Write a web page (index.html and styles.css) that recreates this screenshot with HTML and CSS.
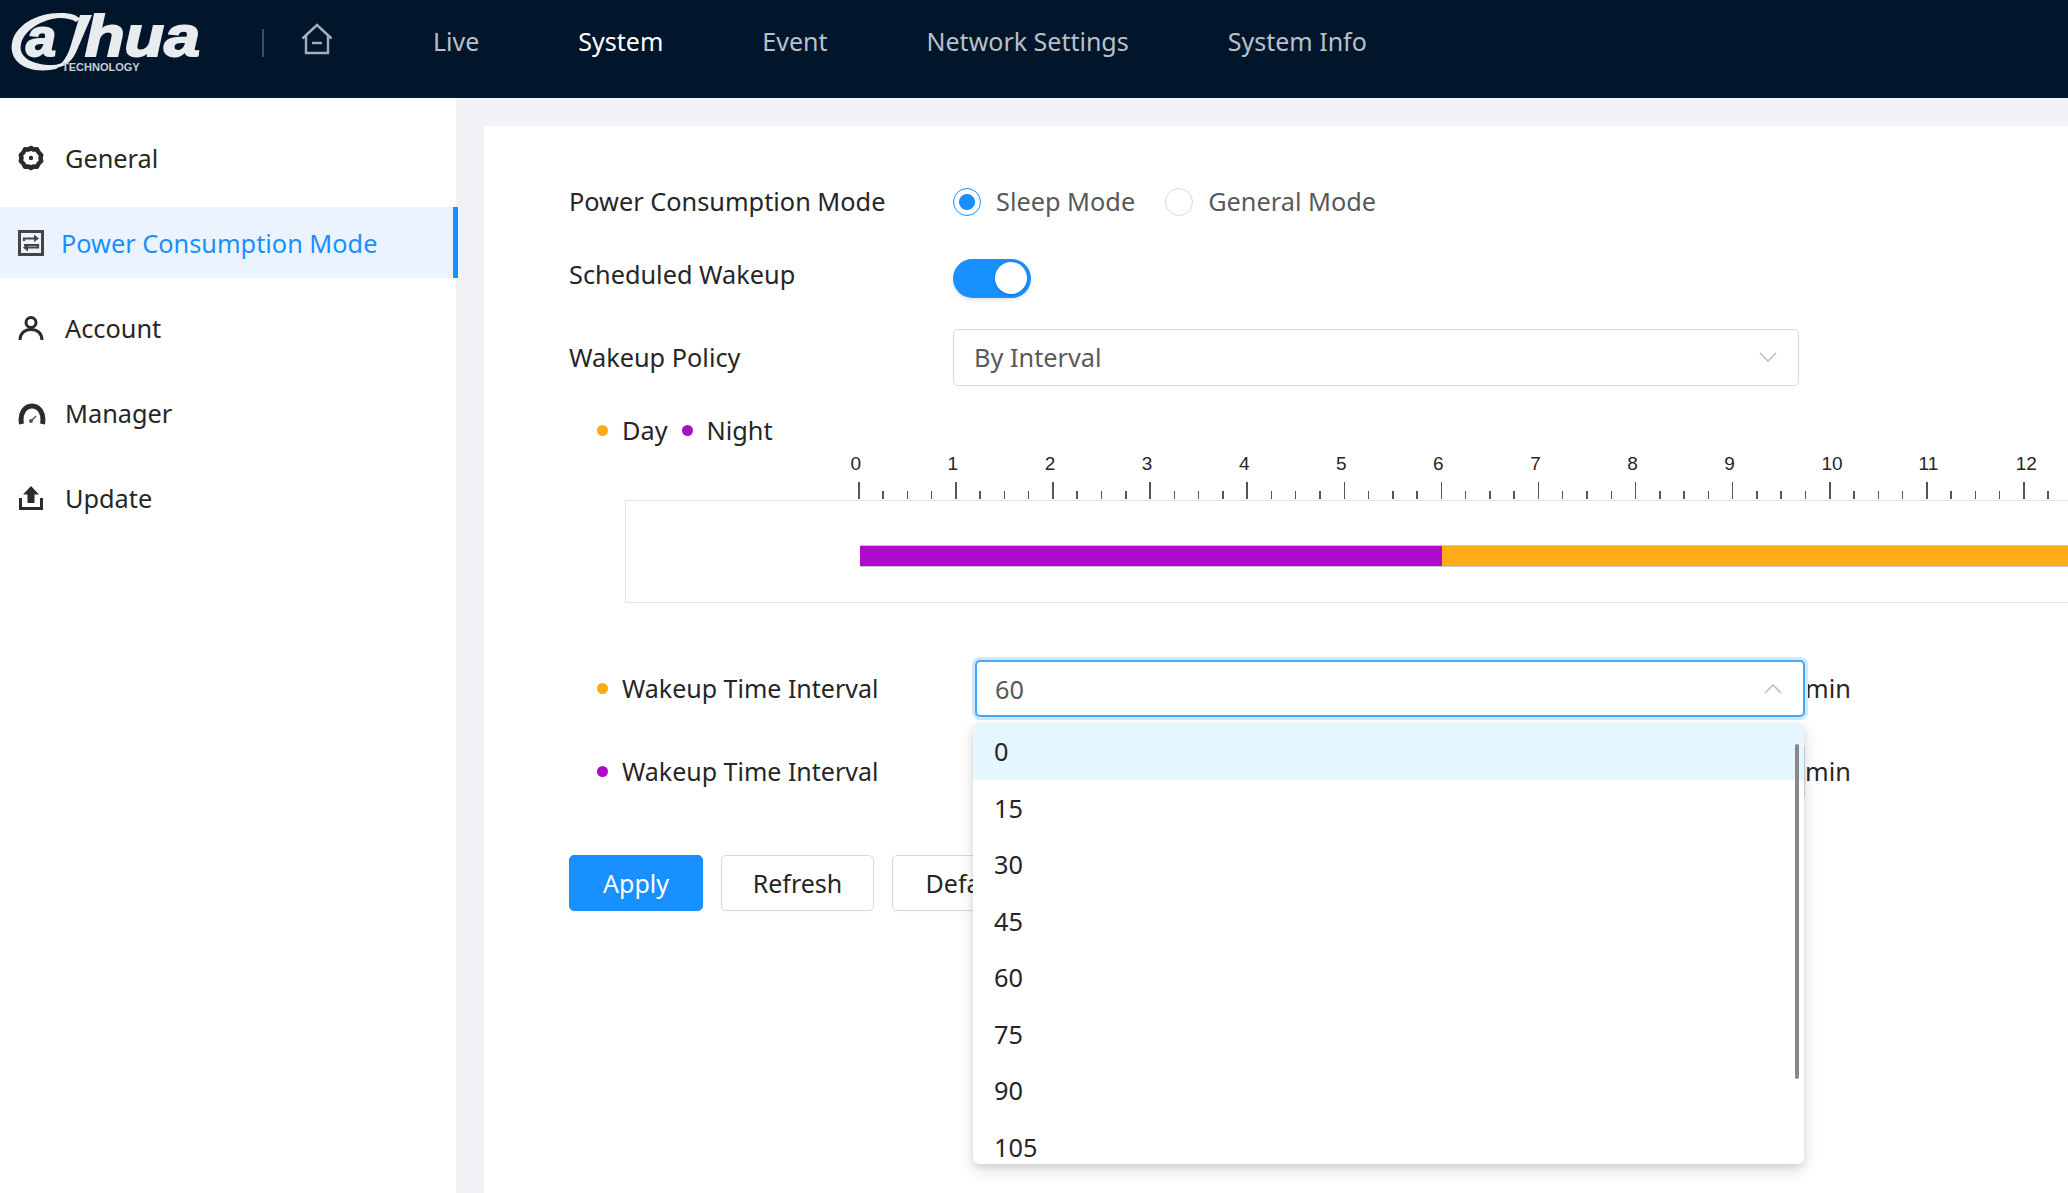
FILE: index.html
```html
<!DOCTYPE html>
<html lang="en">
<head>
  <meta charset="UTF-8">
  <title>Power Consumption Mode</title>
  <link rel="stylesheet" href="styles.css">
</head>
<body>
  <header class="topbar">
    <svg class="logo" viewBox="0 0 210 80" width="210" height="80">
      <path fill="#e9ecef" d="M50 70C24 73 9 60 12 43C15 25 38 12 62 13C70 13 77 15 80 19L76 22C72 19 66 18 60 18C42 19 24 30 21 44C18 57 32 65 52 65C58 65 62 63 66 61L56 69Z"/>
      <path fill="#e9ecef" d="M80 15L92 15L77 50C73 60 67 66 56 68C64 62 67 56 70 48Z"/>
      <text class="logo-a" x="26" y="56">a</text>
      <text class="logo-word" x="85" y="56" textLength="115" lengthAdjust="spacingAndGlyphs">hua</text>
      <text class="logo-sub" x="62" y="71">TECHNOLOGY</text>
    </svg>
    <span class="topbar-divider"></span>
    <svg class="home-icon" viewBox="0 0 32 32" width="32" height="32">
      <path fill="none" stroke="#a6aeb8" stroke-width="2.4" d="M1.5 15.5L16 2L30.500 15.500"/>
      <path fill="none" stroke="#a6aeb8" stroke-width="2.4" d="M5 13V30H27V13"/>
      <path fill="none" stroke="#a6aeb8" stroke-width="2.4" d="M11 20H21"/>
    </svg>
    <nav class="topnav">
      <a>Live</a>
      <a class="active">System</a>
      <a>Event</a>
      <a>Network Settings</a>
      <a>System Info</a>
    </nav>
  </header>

  <div class="main">
    <aside class="sidebar">
      <div class="side-item">
        <svg class="side-icon" viewBox="0 0 26 26" width="26" height="26">
          <path fill="none" stroke="#2b2b2b" stroke-width="4.500" stroke-linejoin="round" d="M13 3L15.500 4.500L19 4.300L20.700 7.500L23.200 10L22.500 13L23.200 16L20.700 18.500L19 21.700L15.500 21.500L13 23L10.500 21.500L7 21.700L5.300 18.500L2.800 16L3.500 13L2.800 10L5.300 7.500L7 4.300L10.500 4.500Z"/>
          <circle cx="13" cy="13" r="2.200" fill="#2b2b2b"/>
        </svg>
        <span>General</span>
      </div>
      <div class="side-item selected">
        <svg class="side-icon" viewBox="0 0 26 26" width="26" height="26">
          <rect x="1.500" y="1.500" width="23" height="23" fill="none" stroke="#444" stroke-width="3"/>
          <path fill="none" stroke="#444" stroke-width="2.200" d="M6 11V8.500H19M6 15H20V17.500H7"/>
          <path fill="#444" d="M16 4.500L21 8.500L16 12ZM10 14L5 17.500L10 21.500Z"/>
        </svg>
        <span>Power Consumption Mode</span>
      </div>
      <div class="side-item">
        <svg class="side-icon" viewBox="0 0 26 26" width="26" height="26">
          <circle cx="13" cy="7.500" r="5" fill="none" stroke="#2b2b2b" stroke-width="3"/>
          <path fill="none" stroke="#2b2b2b" stroke-width="3" d="M2 25C2 18 7 14.500 13 14.500C19 14.500 24 18 24 25"/>
        </svg>
        <span>Account</span>
      </div>
      <div class="side-item item-manager">
        <svg class="side-icon" viewBox="0 0 28 26" width="28" height="26">
          <path fill="none" stroke="#2b2b2b" stroke-width="5" d="M3.500 24C1.500 13 7 6 14 6C21 6 26.500 13 24.500 24"/>
          <path fill="none" stroke="#555" stroke-width="1.500" d="M13 21L18 16"/>
          <circle cx="13" cy="21" r="2" fill="#555"/>
        </svg>
        <span>Manager</span>
      </div>
      <div class="side-item">
        <svg class="side-icon" viewBox="0 0 26 26" width="26" height="26">
          <path fill="#2b2b2b" d="M13 1L21 9.500H16.500V18H9.500V9.500H5Z"/>
          <path fill="none" stroke="#2b2b2b" stroke-width="3" d="M2.500 13V23.500H23.500V13"/>
        </svg>
        <span>Update</span>
      </div>
    </aside>

    <section class="content">
      <div class="card">
        <div class="form-row row-mode">
          <label class="form-label">Power Consumption Mode</label>
          <span class="radio checked"></span>
          <span class="radio-text">Sleep Mode</span>
          <span class="radio"></span>
          <span class="radio-text">General Mode</span>
        </div>
        <div class="form-row row-switch">
          <label class="form-label">Scheduled Wakeup</label>
          <span class="switch"><span class="switch-knob"></span></span>
        </div>
        <div class="form-row row-policy">
          <label class="form-label">Wakeup Policy</label>
          <div class="select select-policy">
            <span>By Interval</span>
            <svg class="chevron" viewBox="0 0 18 10" width="18" height="10"><path fill="none" stroke="#bfbfbf" stroke-width="1.600" d="M1 1L9 9L17 1"/></svg>
          </div>
        </div>

        <div class="legend">
          <span class="dot dot-day"></span><span>Day</span>
          <span class="dot dot-night"></span><span>Night</span>
        </div>

        <div class="ruler">
          <div class="ruler-labels">
            <span>0</span><span>1</span><span>2</span><span>3</span><span>4</span><span>5</span><span>6</span>
            <span>7</span><span>8</span><span>9</span><span>10</span><span>11</span><span>12</span>
          </div>
          <div class="ruler-ticks"></div>
        </div>
        <div class="chart">
          <div class="bar">
            <div class="bar-night"></div>
            <div class="bar-day"></div>
          </div>
        </div>

        <div class="form-row row-interval">
          <span class="dot dot-day"></span>
          <label class="interval-label">Wakeup Time Interval</label>
          <div class="select-wrap">
            <div class="select select-interval focused">
              <span>60</span>
              <svg class="chevron" viewBox="0 0 18 10" width="18" height="10"><path fill="none" stroke="#bfbfbf" stroke-width="1.600" d="M1 9L9 1L17 9"/></svg>
            </div>
            <div class="dropdown">
              <div class="option current">0</div>
              <div class="option">15</div>
              <div class="option">30</div>
              <div class="option">45</div>
              <div class="option">60</div>
              <div class="option">75</div>
              <div class="option">90</div>
              <div class="option">105</div>
              <div class="scroll-thumb"></div>
            </div>
          </div>
          <span class="unit">min</span>
        </div>
        <div class="form-row row-interval second">
          <span class="dot dot-night"></span>
          <label class="interval-label">Wakeup Time Interval</label>
          <div class="select select-interval"></div>
          <span class="unit">min</span>
        </div>

        <div class="actions">
          <button class="btn btn-primary">Apply</button>
          <button class="btn">Refresh</button>
          <button class="btn">Default</button>
        </div>
      </div>
    </section>
  </div>
</body>
</html>
```

FILE: styles.css
```css
* {
  box-sizing: border-box;
}
html, body {
  height: 100%;
}
body {
  margin: 0;
  overflow: hidden;
  display: flex;
  flex-direction: column;
  background-color: #fff;
  color: #262626;
  font-family: "Noto Sans", "Open Sans", sans-serif;
  font-size: 25.3px;
}

/* top bar */
.topbar {
  height: 98px;
  flex-shrink: 0;
  display: flex;
  align-items: flex-start;
  background-color: #01152b;
}
.logo {
  display: block;
  flex-shrink: 0;
}
.logo-a, .logo-word {
  font-family: "Liberation Sans", sans-serif;
  font-weight: bold;
  font-style: italic;
  fill: #e9ecef;
  stroke: #e9ecef;
  stroke-width: 2px;
}
.logo-a {
  font-size: 54px;
}
.logo-word {
  font-size: 58px;
}
.logo-sub {
  font-family: "Liberation Sans", sans-serif;
  font-weight: bold;
  font-size: 11px;
  fill: #c9ced4;
}
.topbar-divider {
  width: 2px;
  height: 28px;
  margin: 29px 0 0 52px;
  background-color: #3d4c5e;
}
.home-icon {
  margin: 23px 0 0 37px;
}
.topnav {
  display: flex;
  margin-left: 100px;
  font-size: 25px;
}
.topnav a {
  margin-right: 99px;
  line-height: 82px;
  color: #b9c0c8;
}
.topnav a.active {
  color: #fff;
}

.main {
  flex: 1;
  display: flex;
  min-height: 0;
}

/* left menu */
.sidebar {
  width: 456px;
  flex-shrink: 0;
  padding-top: 24px;
  background-color: #fff;
}
.side-item {
  position: relative;
  height: 71px;
  margin-bottom: 14px;
  padding-left: 18px;
  display: flex;
  align-items: center;
  gap: 21px;
}
.side-item.selected {
  gap: 17px;
  background-color: #ebf3fe;
  color: #1890ff;
}
.side-item.item-manager {
  gap: 19px;
}
.side-item.selected::after {
  content: "";
  position: absolute;
  top: 0;
  right: -2px;
  width: 5px;
  height: 100%;
  background-color: #1890ff;
}

/* page content */
.content {
  flex: 1;
  min-width: 0;
  padding: 28px 0 0 28px;
  background-color: #f0f2f5;
}
.card {
  height: 100%;
  padding: 48px 0 0 85px;
  background-color: #fff;
}
.form-row {
  display: flex;
  align-items: center;
}
.form-label {
  width: 384px;
  flex-shrink: 0;
}
.row-mode {
  height: 56px;
}
.row-mode .form-label, .row-mode .radio-text {
  margin-top: -2px;
}
.row-switch {
  height: 56px;
  margin-top: 20px;
}
.row-switch .form-label {
  margin-top: -8px;
}
.row-policy {
  height: 56px;
  margin-top: 23px;
}
.radio {
  width: 28px;
  height: 28px;
  flex-shrink: 0;
  border: 1px solid #d9d9d9;
  border-radius: 50%;
  background-color: #fff;
}
.radio.checked {
  border: 1.500px solid #1890ff;
  background: radial-gradient(circle, #1890ff 0 7.500px, transparent 8.500px);
}
.radio-text {
  margin-left: 15px;
  margin-right: 30px;
  color: #595959;
}
.switch {
  width: 78px;
  height: 39px;
  padding: 3px 4px 0 0;
  display: flex;
  justify-content: flex-end;
  border-radius: 20px;
  background-color: #1890ff;
  box-shadow: 0 2px 4px rgba(0, 0, 0, 0.12);
}
.switch-knob {
  width: 32px;
  height: 32px;
  border-radius: 50%;
  background-color: #fff;
  box-shadow: 0 1px 3px rgba(0, 40, 80, 0.3);
}
.select {
  display: flex;
  align-items: center;
  justify-content: space-between;
  border: 1px solid #d9d9d9;
  border-radius: 5px;
  background-color: #fff;
  color: #595959;
}
.select-policy {
  width: 846px;
  height: 57px;
  padding: 0 21px 0 20px;
}
.select-wrap {
  position: relative;
  flex-shrink: 0;
}
.select-interval {
  width: 830px;
  height: 57px;
  padding: 0 21px 0 18px;
}
.select-interval.focused {
  border: 2px solid #40a9ff;
  box-shadow: 0 0 0 3px #cfe7ff;
}

.legend {
  height: 40px;
  margin-top: 25px;
  padding-left: 28px;
  display: flex;
  align-items: center;
}
.dot {
  width: 11px;
  height: 11px;
  flex-shrink: 0;
  border-radius: 50%;
}
.dot-day {
  background-color: #fdab17;
}
.dot-night {
  background-color: #ad0bcc;
}
.legend .dot {
  margin-right: 14px;
}
.legend .dot-night {
  margin-left: 14px;
}

/* time ruler over the chart */
.ruler {
  margin-left: 288.500px;
}
.ruler-labels {
  display: flex;
  height: 32px;
  padding-top: 2px;
  font-family: "Liberation Sans", Arial, sans-serif;
  font-size: 19px;
  line-height: 24px;
}
.ruler-labels span {
  width: 97.100px;
  flex-shrink: 0;
  position: relative;
  left: -7px;
}
.ruler-ticks {
  height: 17px;
  width: 1300px;
  background-image:
    repeating-linear-gradient(90deg, #555 0 1.500px, transparent 1.500px 97.100px),
    repeating-linear-gradient(90deg, #555 0 1.500px, transparent 1.500px 24.275px);
  background-size: 100% 100%, 100% 8px;
  background-position: 0 0, 0 100%;
  background-repeat: no-repeat;
}
.chart {
  height: 103px;
  margin-top: 1px;
  margin-left: 56px;
  padding: 44px 0 0 234px;
  border: 1px solid #e4e4e4;
  border-right: none;
}
.bar {
  display: flex;
  height: 22px;
  border-top: 1px solid #c8c8c8;
  border-bottom: 1px solid #c8c8c8;
}
.bar-night {
  width: 582px;
  background-color: #ad0bcc;
}
.bar-day {
  flex: 1;
  background-color: #fdab17;
}

.row-interval {
  height: 57px;
  margin-top: 57px;
  padding-left: 28px;
}
.row-interval.second {
  margin-top: 26px;
}
.row-interval .dot {
  margin-right: 14px;
}
.interval-label {
  width: 353px;
  flex-shrink: 0;
  margin-top: -2px;
  font-size: 25px;
}
.unit {
  margin-top: -2px;
}
.dropdown {
  position: absolute;
  top: 63px;
  left: -2px;
  width: 831px;
  height: 441px;
  overflow: hidden;
  border-radius: 6px;
  background-color: #fff;
  box-shadow: 0 6px 16px rgba(0, 0, 0, 0.14), 0 3px 6px rgba(0, 0, 0, 0.08);
  z-index: 5;
}
.option {
  height: 56.500px;
  padding-left: 21px;
  display: flex;
  align-items: center;
}
.option.current {
  background-color: #e6f6ff;
}
.scroll-thumb {
  position: absolute;
  top: 21px;
  right: 5px;
  width: 4px;
  height: 335px;
  border-radius: 2px;
  background-color: #888;
}

.actions {
  display: flex;
  gap: 18px;
  margin-top: 55px;
}
.btn {
  width: 153px;
  height: 56px;
  border: 1px solid #d9d9d9;
  border-radius: 5px;
  background-color: #fff;
  color: #262626;
  font-family: inherit;
  font-size: 25px;
  box-shadow: 0 2px 2px rgba(0, 0, 0, 0.02);
}
.btn-primary {
  width: 134px;
  border-color: #1890ff;
  background-color: #1890ff;
  color: #fff;
}
```
